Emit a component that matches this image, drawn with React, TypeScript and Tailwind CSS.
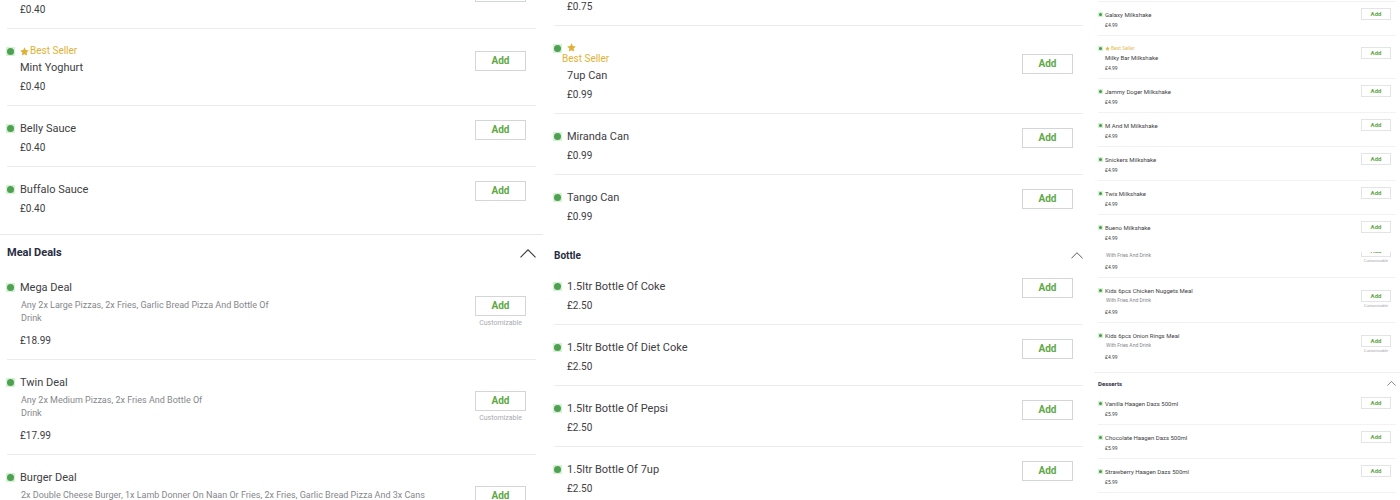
import { useState } from "react";
import type { ReactNode } from "react";

type Item = {
  name: string;
  price: string;
  badge?: "inline" | "stacked";
  description?: string;
  customizable?: boolean;
};

const SAUCES: Item[] = [
  { name: "Garlic Sauce", price: "£0.40" },
  { name: "Mint Yoghurt", price: "£0.40", badge: "inline" },
  { name: "Belly Sauce", price: "£0.40" },
  { name: "Buffalo Sauce", price: "£0.40" },
];

const MEAL_DEALS: Item[] = [
  {
    name: "Mega Deal",
    price: "£18.99",
    description: "Any 2x Large Pizzas, 2x Fries, Garlic Bread Pizza And Bottle Of\nDrink",
    customizable: true,
  },
  {
    name: "Twin Deal",
    price: "£17.99",
    description: "Any 2x Medium Pizzas, 2x Fries And Bottle Of\nDrink",
    customizable: true,
  },
  {
    name: "Burger Deal",
    price: "£19.99",
    description:
      "2x Double Cheese Burger, 1x Lamb Donner On Naan Or Fries, 2x Fries, Garlic Bread Pizza And 3x Cans\nOf Drink",
    customizable: true,
  },
];

const CANS: Item[] = [
  { name: "Water", price: "£0.75" },
  { name: "7up Can", price: "£0.99", badge: "stacked" },
  { name: "Miranda Can", price: "£0.99" },
  { name: "Tango Can", price: "£0.99" },
];

const BOTTLES: Item[] = [
  { name: "1.5ltr Bottle Of Coke", price: "£2.50" },
  { name: "1.5ltr Bottle Of Diet Coke", price: "£2.50" },
  { name: "1.5ltr Bottle Of Pepsi", price: "£2.50" },
  { name: "1.5ltr Bottle Of 7up", price: "£2.50" },
];

const MILKSHAKES: Item[] = [
  { name: "Galaxy Milkshake", price: "£4.99" },
  { name: "Milky Bar Milkshake", price: "£4.99", badge: "inline" },
  { name: "Jammy Doger Milkshake", price: "£4.99" },
  { name: "M And M Milkshake", price: "£4.99" },
  { name: "Snickers Milkshake", price: "£4.99" },
  { name: "Twix Milkshake", price: "£4.99" },
  { name: "Bueno Milkshake", price: "£4.99" },
];

const KIDS_FIRST: Item[] = [
  { name: "Kids Burger Meal", price: "£4.99", description: "With Fries And Drink", customizable: true },
];

const KIDS: Item[] = [
  { name: "Kids 6pcs Chicken Nuggets Meal", price: "£4.99", description: "With Fries And Drink", customizable: true },
  { name: "Kids 6pcs Onion Rings Meal", price: "£4.99", description: "With Fries And Drink", customizable: true },
];

const DESSERTS: Item[] = [
  { name: "Vanilla Haagen Dazs 500ml", price: "£5.99" },
  { name: "Chocolate Haagen Dazs 500ml", price: "£5.99" },
  { name: "Strawberry Haagen Dazs 500ml", price: "£5.99" },
];

function Star({ className }: { className: string }) {
  return (
    <svg viewBox="0 0 24 24" className={className} fill="currentColor" aria-hidden="true">
      <path d="M12 0.8l3.5 7.3 8 1.1-5.8 5.6 1.4 8L12 19l-7.1 3.8 1.4-8L0.5 9.2l8-1.1z" />
    </svg>
  );
}

function Chevron({ className }: { className: string }) {
  return (
    <svg viewBox="0 0 16 9" className={className} fill="none" stroke="#3a3a3a" strokeWidth="1.1" aria-hidden="true">
      <path d="M0.5 8.3L8 0.8l7.5 7.5" />
    </svg>
  );
}

function Row({ item }: { item: Item }) {
  return (
    <li className="flex items-center justify-between border-b border-[#ececee] pt-[14px] pb-[10px] last:border-transparent">
      <div className="flex gap-[5px]">
        <span className="mt-1 -ml-px flex size-[9px] shrink-0 items-center justify-center bg-[#d3f3d3]">
          <span className="size-[7px] rounded-full bg-[#4fa052]" />
        </span>
        <div className="text-[#3e4043]">
          {item.badge === "inline" && (
            <p className="flex items-center gap-px py-[2px] text-[10px] leading-[12px] text-[#dfb136]">
              <Star className="size-[9px]" />
              Best Seller
            </p>
          )}
          {item.badge === "stacked" && (
            <div className="pt-px pb-[2px] text-[10px] leading-[12px] text-[#dfb136]">
              <p className="flex h-3 items-center">
                <Star className="size-[9px]" />
              </p>
              <p className="-ml-[5px]">Best Seller</p>
            </div>
          )}
          <h3 className="pt-px text-[11px] leading-[16px]">{item.name}</h3>
          {item.description && (
            <p className="pt-[3px] pb-[5px] pl-px text-[9px] leading-[13px] whitespace-pre-line text-[#85878b]">
              {item.description}
            </p>
          )}
          <p className="pt-[3px] text-[10px] leading-[16px]">{item.price}</p>
        </div>
      </div>
      <div className="relative -mt-[6px] mr-[10px] mb-[10px]">
        <button className="block h-5 w-[51px] border border-[#d4d5d9] bg-white text-center text-[10px] leading-[18px] font-bold text-[#60a846]">
          Add
        </button>
        {item.customizable && (
          <span className="absolute top-full left-1/2 mt-px -translate-x-1/2 text-[7px] leading-[12px] text-[#a9abb0]">
            Customizable
          </span>
        )}
      </div>
    </li>
  );
}

function SmallRow({ item }: { item: Item }) {
  return (
    <li className="flex items-center justify-between border-b border-[#f2f2f3] pt-2 pb-[5px]">
      <div className="flex gap-[2px]">
        <span className="mt-[2px] flex size-[5px] shrink-0 items-center justify-center bg-[#d3f3d3]">
          <span className="size-[3px] rounded-full bg-[#459a48]" />
        </span>
        <div className="text-[#3e4043]">
          {item.badge && (
            <p className="flex items-center gap-px text-[5px] leading-[9px] text-[#e5bd58]">
              <Star className="size-[5px]" />
              Best Seller
            </p>
          )}
          <h3 className="text-[6px] leading-[9px]">{item.name}</h3>
          {item.description && (
            <p className="py-px pl-px text-[5px] leading-[9px] text-[#85878b]">{item.description}</p>
          )}
          <p className="pt-[2px] text-[5px] leading-[9px]">{item.price}</p>
        </div>
      </div>
      <div className="relative -mt-[7px] mr-[5px] mb-[5px]">
        <button className="block h-3 w-[30px] border border-[#e3e4e6] bg-white text-center text-[6px] leading-[10px] font-bold text-[#60a846]">
          Add
        </button>
        {item.customizable && (
          <span className="absolute top-full left-1/2 -translate-x-1/2 text-[4px] leading-[8px] text-[#a9abb0]">
            Customizable
          </span>
        )}
      </div>
    </li>
  );
}

function Section({
  title,
  headerClass,
  chevronClass,
  children,
}: {
  title: string;
  headerClass: string;
  chevronClass: string;
  children: ReactNode;
}) {
  const [open, setOpen] = useState(true);
  return (
    <section>
      <h2>
        <button
          aria-expanded={open}
          onClick={() => setOpen(!open)}
          className={`flex w-full items-center justify-between font-bold text-[#282c3f] ${headerClass}`}
        >
          {title}
          <Chevron className={chevronClass} />
        </button>
      </h2>
      {open && children}
    </section>
  );
}

function LargeList({ items }: { items: Item[] }) {
  return (
    <ul className="px-[7px]">
      {items.map((item) => (
        <Row key={item.name} item={item} />
      ))}
    </ul>
  );
}

function SmallList({ items, openEnded = false }: { items: Item[]; openEnded?: boolean }) {
  return (
    <ul className={openEnded ? "px-1 [&>li:last-child]:border-transparent" : "px-1"}>
      {items.map((item) => (
        <SmallRow key={item.name} item={item} />
      ))}
    </ul>
  );
}

export default function App() {
  return (
    <main className="grid h-screen grid-cols-[543fr_543fr_306fr] gap-1 overflow-hidden bg-white font-['Roboto',sans-serif]">
      <div className="min-w-0">
        <div className="-mt-8 border-b border-[#e9e9eb] pb-[6px]">
          <LargeList items={SAUCES} />
        </div>
        <Section title="Meal Deals" headerClass="h-[30px] px-[7px] pt-[6px] text-[11px]" chevronClass="h-[9px] w-4">
          <LargeList items={MEAL_DEALS} />
        </Section>
      </div>

      <div className="min-w-0">
        <div className="-mt-[35px]">
          <LargeList items={CANS} />
        </div>
        <Section title="Bottle" headerClass="h-7 px-[7px] pt-[10px] text-[10px]" chevronClass="h-[7px] w-3">
          <LargeList items={BOTTLES} />
        </Section>
      </div>

      <div className="min-w-0">
        <div className="mx-1 mt-px border-t border-[#f2f2f3]" />
        <SmallList items={MILKSHAKES} openEnded />
        <div className="mt-[3px] flex h-[26px] flex-col justify-end overflow-hidden">
          <SmallList items={KIDS_FIRST} />
        </div>
        <div className="border-b border-[#f0f0f1] pb-1">
          <SmallList items={KIDS} openEnded />
        </div>
        <Section title="Desserts" headerClass="h-[18px] px-1 pt-[3px] text-[6px]" chevronClass="h-[5px] w-[9px]">
          <SmallList items={DESSERTS} />
        </Section>
      </div>
    </main>
  );
}
